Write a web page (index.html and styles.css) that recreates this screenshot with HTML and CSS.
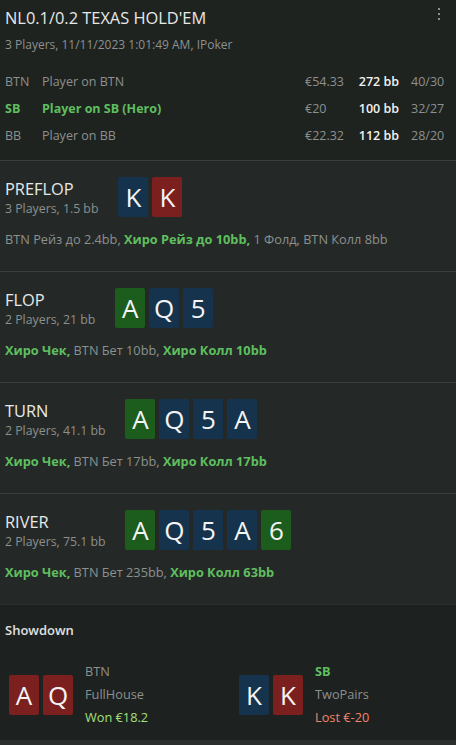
FILE: index.html
```html
<!DOCTYPE html>
<html lang="en">
<head>
<meta charset="utf-8">
<title>Hand</title>
<link rel="stylesheet" href="styles.css">
</head>
<body>
<div class="hand">
  <header class="head">
    <div class="menu"><span></span><span></span><span></span></div>
    <div class="title">NL0.1/0.2 TEXAS HOLD'EM</div>
    <div class="sub">3 Players, 11/11/2023 1:01:49 AM, IPoker</div>
    <div class="players">
      <div class="pos">BTN</div><div class="name">Player on BTN</div><div class="amt">€54.33</div><div class="bb">272 bb</div><div class="stat">40/30</div>
      <div class="pos hero">SB</div><div class="name hero">Player on SB (Hero)</div><div class="amt">€20</div><div class="bb">100 bb</div><div class="stat">32/27</div>
      <div class="pos">BB</div><div class="name">Player on BB</div><div class="amt">€22.32</div><div class="bb">112 bb</div><div class="stat">28/20</div>
    </div>
  </header>

  <section class="street">
    <div class="row">
      <div class="info"><div class="sname">PREFLOP</div><div class="sinfo">3 Players, 1.5 bb</div></div>
      <div class="cards"><span class="card blue">K</span><span class="card red">K</span></div>
    </div>
    <div class="actions">BTN Рейз до 2.4bb, <b>Хиро Рейз до 10bb,</b> 1 Фолд, BTN Колл 8bb</div>
  </section>

  <section class="street">
    <div class="row">
      <div class="info"><div class="sname">FLOP</div><div class="sinfo">2 Players, 21 bb</div></div>
      <div class="cards"><span class="card green">A</span><span class="card blue">Q</span><span class="card blue">5</span></div>
    </div>
    <div class="actions"><b>Хиро Чек,</b> BTN Бет 10bb, <b>Хиро Колл 10bb</b></div>
  </section>

  <section class="street">
    <div class="row">
      <div class="info"><div class="sname">TURN</div><div class="sinfo">2 Players, 41.1 bb</div></div>
      <div class="cards"><span class="card green">A</span><span class="card blue">Q</span><span class="card blue">5</span><span class="card blue">A</span></div>
    </div>
    <div class="actions"><b>Хиро Чек,</b> BTN Бет 17bb, <b>Хиро Колл 17bb</b></div>
  </section>

  <section class="street">
    <div class="row">
      <div class="info"><div class="sname">RIVER</div><div class="sinfo">2 Players, 75.1 bb</div></div>
      <div class="cards"><span class="card green">A</span><span class="card blue">Q</span><span class="card blue">5</span><span class="card blue">A</span><span class="card green">6</span></div>
    </div>
    <div class="actions"><b>Хиро Чек,</b> BTN Бет 235bb, <b>Хиро Колл 63bb</b></div>
  </section>

  <section class="showdown">
    <div class="sd-title">Showdown</div>
    <div class="sd-players">
      <div class="sd-player">
        <div class="cards"><span class="card red">A</span><span class="card red">Q</span></div>
        <div class="sd-text">
          <div class="sd-pos">BTN</div>
          <div class="sd-hand">FullHouse</div>
          <div class="won">Won €18.2</div>
        </div>
      </div>
      <div class="sd-player">
        <div class="cards"><span class="card blue">K</span><span class="card red">K</span></div>
        <div class="sd-text">
          <div class="sd-pos hero">SB</div>
          <div class="sd-hand">TwoPairs</div>
          <div class="lost">Lost €-20</div>
        </div>
      </div>
    </div>
  </section>
  <div class="foot"></div>
</div>
</body>
</html>
```
FILE: styles.css
```css
* { box-sizing: border-box; }
html, body { margin: 0; padding: 0; }
body {
  background: #1e2320;
  font-family: "Open Sans", "Noto Sans", sans-serif;
  color: #e6e8e7;
}
.hand { width: 456px; }
.head {
  position: relative;
  padding: 6px 11px 11px 5px;
  background: #1e2320;
}
.menu {
  position: absolute;
  top: 8px;
  right: 16px;
  display: flex;
  flex-direction: column;
  gap: 3px;
}
.menu span { width: 2px; height: 2px; background: #8a8d8c; }
.title { font-size: 16.4px; line-height: 24px; color: #e6e8e7; }
.sub { font-size: 12px; line-height: 18px; margin-top: 6px; color: #8d908f; }
.players {
  margin-top: 14px;
  display: grid;
  grid-template-columns: 37px 1fr 52px 42px 46px;
  grid-auto-rows: 27px;
  align-items: center;
  font-size: 12.5px;
  color: #8d908f;
}
.players .bb { text-align: right; color: #f2f2f2; font-weight: 600; }
.players .stat { padding-left: 12px; }
.hero { color: #5fbf5f !important; font-weight: 700; }

.street {
  background: #242927;
  border-top: 1px solid #3a3f3d;
  padding: 16px 5px 23px;
}
.row { display: flex; align-items: flex-start; gap: 20px; }
.sname { font-size: 16.4px; line-height: 24px; color: #e6e8e7; }
.sinfo { font-size: 12.3px; line-height: 16px; color: #8d908f; }
.cards { display: flex; gap: 4px; }
.card {
  width: 30px; height: 40px;
  border-radius: 2px;
  display: flex; align-items: center; justify-content: center;
  font-size: 26px; color: #f4f4f4;
}
.blue { background: #15334d; }
.red { background: #7b1f1f; }
.green { background: #1c5c1c; }
.actions {
  margin-top: 13px;
  font-size: 12.75px; line-height: 18px;
  color: #8d908f;
}
.actions b { color: #5fbf5f; font-weight: 700; }

.showdown {
  background: #1d211f;
  border-top: 1px solid #2b302e;
  padding: 16px 0 11px;
}
.sd-title { padding-left: 5px; font-size: 13px; line-height: 18px; font-weight: 600; color: #e0e2e1; }
.sd-players {
  margin-top: 21px;
  display: grid;
  grid-template-columns: 230px 1fr;
  padding-left: 9px;
}
.sd-player { display: flex; align-items: center; gap: 12px; }
.sd-text { font-size: 12.75px; line-height: 23px; color: #8d908f; }
.won { color: #a6e07c; }
.lost { color: #f2846f; }
.foot { height: 5px; background: #2a2f2d; }
```
